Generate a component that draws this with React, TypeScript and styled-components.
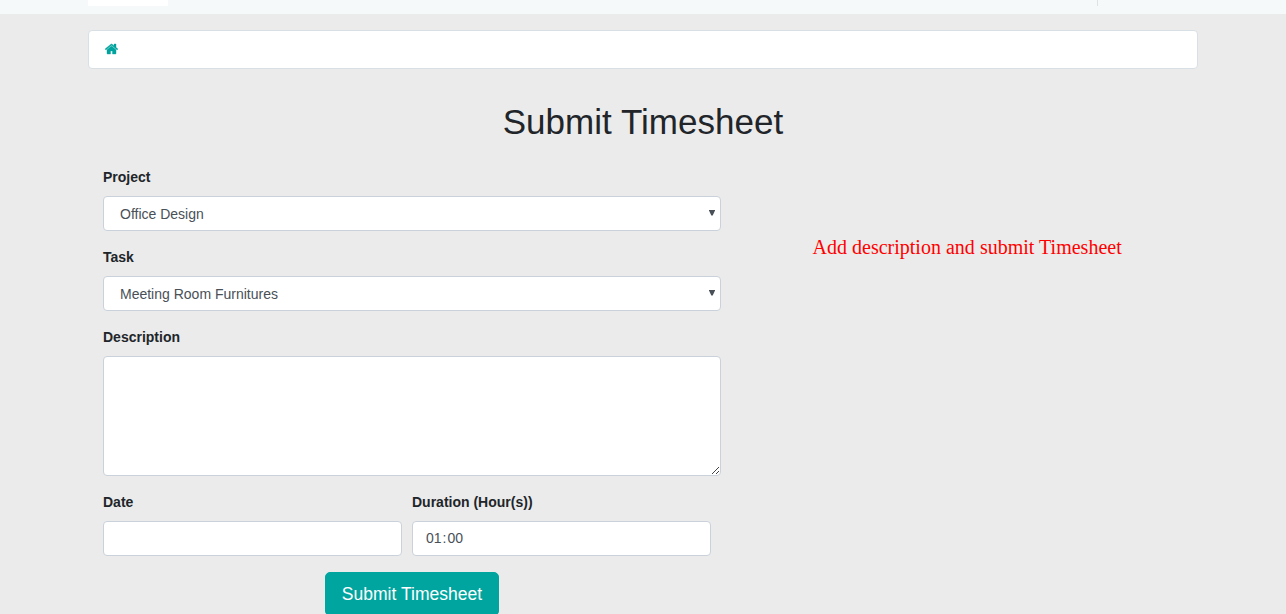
import React from 'react';
import styled, { createGlobalStyle } from 'styled-components';

const GlobalStyle = createGlobalStyle`
  *, *::before, *::after { box-sizing: border-box; }
  html, body { margin: 0; height: 614px; overflow: hidden; }
  body {
    background: #ebebeb;
    color: #212529;
    font: 14px/21px "Liberation Sans", Arial, sans-serif;
  }
`;

const Page = styled.div`
  height: 614px;
  overflow: hidden;
`;

const Header = styled.header`
  height: 14px;
  background: #f5f9fa;
`;

const Container = styled.div`
  width: 1110px;
  margin: 0 auto;
`;

const HeaderInner = styled(Container)`
  display: flex;
  justify-content: space-between;
  padding-right: 100px;
`;

const LogoEdge = styled.div`
  width: 80px;
  height: 6px;
  background: #fff;
`;

const Divider = styled.div`
  width: 1px;
  height: 6px;
  background: #dee2e6;
`;

const Breadcrumb = styled.nav`
  display: flex;
  align-items: center;
  height: 39px;
  margin-top: 16px;
  padding: 0 16px 2px;
  background: #fff;
  border: 1px solid #d8e0e6;
  border-radius: 4px;
`;

const HomeIcon = styled.svg`
  display: block;
  width: 13px;
  height: 14px;
  fill: #00a39d;
  stroke: #00a39d;
  stroke-width: 50;
`;

const Title = styled.h1`
  margin: 32px 0 24px;
  font-size: 35px;
  font-weight: 400;
  line-height: 42px;
  letter-spacing: 0.03px;
  text-align: center;
`;

const Columns = styled.div`
  display: flex;
  padding-left: 15px;
`;

const Form = styled.form`
  width: 618px;
`;

const Field = styled.div`
  margin-bottom: 16px;
`;

const Label = styled.label`
  display: block;
  margin-bottom: 8px;
  font-weight: 700;
`;

const Control = styled.div<{ $height?: number }>`
  position: relative;
  width: 100%;
  height: ${({ $height = 35 }) => $height}px;
  padding: 6px 12px;
  color: #495057;
  background: #fff;
  border: 1px solid #cad1da;
  border-radius: 4px;
`;

const SelectControl = styled(Control)`
  padding: 7px 16px 5px;
`;

const Arrow = styled.svg`
  position: absolute;
  top: 13px;
  right: 5px;
  width: 6px;
  height: 6px;
  fill: #495057;
`;

const ResizeGrip = styled.svg`
  position: absolute;
  right: 1px;
  bottom: 1px;
  width: 7px;
  height: 7px;
  fill: #444;
`;

const Pair = styled.div`
  display: grid;
  grid-template-columns: 299px 299px;
  gap: 10px;
`;

const TimePart = styled.span`
  padding: 0 1px;
`;

const Actions = styled.div`
  display: flex;
  justify-content: center;
`;

const SubmitButton = styled.button`
  width: 174px;
  height: 44px;
  padding: 8px 15px;
  color: #fff;
  background: #00a59f;
  border: 1px solid #00a59f;
  border-radius: 5px;
  font: 17.5px/26px "Liberation Sans", Arial, sans-serif;
  letter-spacing: 0.02px;
`;

const Note = styled.p`
  margin: 69px 0 0 91.5px;
  color: #f00;
  font: 20px/23px "Liberation Serif", "Times New Roman", serif;
  letter-spacing: 0.01px;
`;

function SelectField({ label, value }: { label: string; value: string }) {
  return (
    <Field>
      <Label>{label}</Label>
      <SelectControl>
        {value}
        <Arrow viewBox="0 0 6 6"><path d="M0 0h6v.4L3.700 5.500H2.300L0 .4z" /></Arrow>
      </SelectControl>
    </Field>
  );
}

const gripDots = [[0, 6], [1, 5], [2, 4], [3, 3], [4, 2], [5, 1], [6, 0], [4, 6], [5, 5], [6, 4]];

export default function App() {
  return (
    <>
      <GlobalStyle />
      <Page>
        <Header>
          <HeaderInner><LogoEdge /><Divider /></HeaderInner>
        </Header>
        <Container>
          <Breadcrumb>
            <HomeIcon viewBox="0 0 1664 1792">
              <path d="M1408 992v480q0 26-19 45t-45 19H960v-384H704v384H320q-26 0-45-19t-19-45V992q0-1 .5-3t.5-3l575-474 575 474q1 2 1 6zm223-69l-62 74q-8 9-21 11h-3q-13 0-21-7L832 424l-692 577q-12 8-24 7-13-2-21-11l-62-74q-8-10-7-23.500t11-21.500l719-599q32-26 76-26t76 26l244 204V288q0-14 9-23t23-9h192q14 0 23 9t9 23v408l219 182q10 8 11 21.500t-7 23.500z" />
            </HomeIcon>
          </Breadcrumb>
          <Title>Submit Timesheet</Title>
          <Columns>
            <Form>
              <SelectField label="Project" value="Office Design" />
              <SelectField label="Task" value="Meeting Room Furnitures" />
              <Field>
                <Label>Description</Label>
                <Control $height={120}>
                  <ResizeGrip viewBox="0 0 7 7">
                    {gripDots.map(([x, y]) => <rect key={`${x}-${y}`} x={x} y={y} width="1" height="1" />)}
                  </ResizeGrip>
                </Control>
              </Field>
              <Pair>
                <Field>
                  <Label>Date</Label>
                  <Control />
                </Field>
                <Field>
                  <Label>Duration (Hour(s))</Label>
                  <Control><TimePart>01</TimePart>:<TimePart>00</TimePart></Control>
                </Field>
              </Pair>
              <Actions><SubmitButton type="button">Submit Timesheet</SubmitButton></Actions>
            </Form>
            <Note>Add description and submit Timesheet</Note>
          </Columns>
        </Container>
      </Page>
    </>
  );
}
